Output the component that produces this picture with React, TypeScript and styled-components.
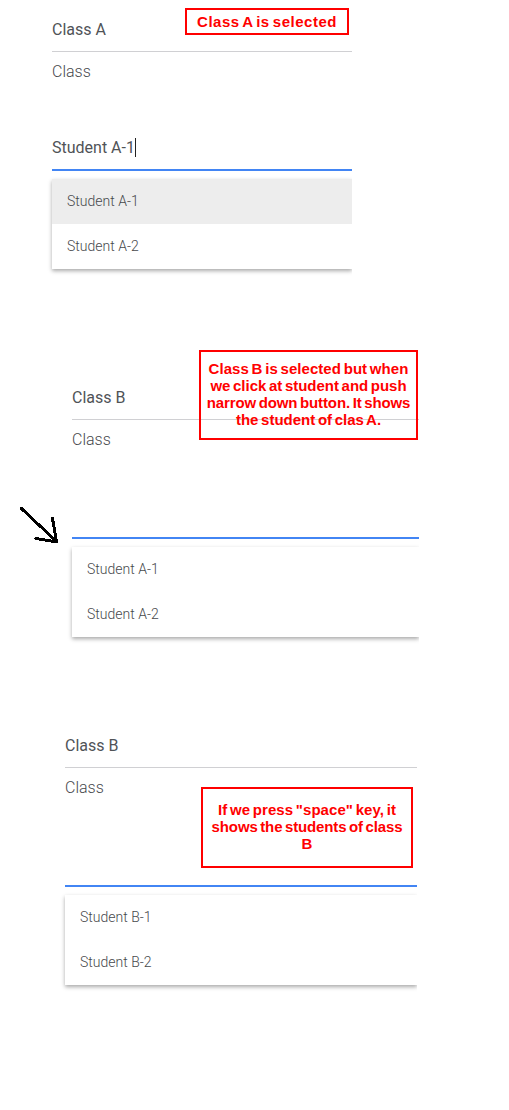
import React from "react";
import styled, { createGlobalStyle } from "styled-components";

const GlobalStyle = createGlobalStyle`
  * { box-sizing: border-box; }
  body { margin: 0; background: #fff; }
`;

const Page = styled.main`
  position: relative;
  display: flex;
  flex-direction: column;
  height: 1110px;
  overflow: hidden;
  font-family: Roboto, "Liberation Sans", sans-serif;
`;

const Step = styled.section<{ $left: number; $width: number }>`
  flex: none;
  display: flex;
  flex-direction: column;
  width: ${(p) => p.$width}px;
  height: 348px;
  margin-left: ${(p) => p.$left}px;

  &:first-child { height: 368px; }
`;

const ClassField = styled.div`
  height: 52px;
  padding-top: 20px;
  border-bottom: 1px solid #d0d0d3;
  color: #505357;
  font-size: 16px;
  line-height: 20px;
`;

const Label = styled.div`
  padding-top: 10px;
  color: #47494c;
  font-size: 16px;
  font-weight: 300;
  line-height: 20px;
`;

const StudentField = styled.div`
  display: flex;
  align-items: flex-start;
  height: 34px;
  margin-top: 55px;
  padding-top: 1px;
  border-bottom: 2px solid #4285f4;
  color: #505357;
  font-size: 16px;
  line-height: 20px;
`;

const Caret = styled.span`
  width: 1px;
  height: 19px;
  background: #222;
`;

const Menu = styled.ul`
  margin: 8px 0 0;
  padding: 0;
  list-style: none;
  background: #fff;
  box-shadow: 0 2px 4px rgba(0, 0, 0, 0.34);
  clip-path: inset(-8px 0 -10px -8px);
`;

const Option = styled.li<{ $active?: boolean }>`
  height: 45px;
  padding-left: 15px;
  background: ${(p) => (p.$active ? "#ededed" : "transparent")};
  color: #47494c;
  font-size: 14px;
  font-weight: 300;
  line-height: 45px;
`;

const Note = styled.aside<{ $x: number; $y: number; $w: number; $h: number; $lift?: number }>`
  position: absolute;
  left: ${(p) => p.$x}px;
  top: ${(p) => p.$y}px;
  width: ${(p) => p.$w}px;
  height: ${(p) => p.$h}px;
  display: flex;
  flex-direction: column;
  align-items: center;
  justify-content: center;
  padding-bottom: ${(p) => p.$lift ?? 0}px;
  border: 2px solid #f00;
  color: #f00;
  font: bold 15px/17px "Liberation Sans", Arial, sans-serif;
  word-spacing: -1.5px;
  white-space: nowrap;
`;

const NoteLine = styled.span<{ $spacing?: number }>`
  letter-spacing: ${(p) => p.$spacing ?? 0}px;
`;

const Arrow = styled.svg`
  position: absolute;
  left: 18px;
  top: 504px;
`;

type StepProps = {
  left: number;
  width: number;
  className: string;
  student?: string;
  options: string[];
  active?: number;
};

function FormStep({ left, width, className, student, options, active }: StepProps) {
  return (
    <Step $left={left} $width={width}>
      <ClassField>{className}</ClassField>
      <Label>Class</Label>
      <StudentField>
        {student}
        {student && <Caret />}
      </StudentField>
      <Menu>
        {options.map((o, i) => (
          <Option key={o} $active={i === active}>{o}</Option>
        ))}
      </Menu>
    </Step>
  );
}

export default function App() {
  return (
    <>
      <GlobalStyle />
      <Page>
        <FormStep left={52} width={300} className="Class A" student="Student A-1" options={["Student A-1", "Student A-2"]} active={0} />
        <FormStep left={72} width={347} className="Class B" options={["Student A-1", "Student A-2"]} />
        <FormStep left={65} width={352} className="Class B" options={["Student B-1", "Student B-2"]} />
        <Note $x={185} $y={8} $w={164} $h={27}>
          <NoteLine $spacing={0.5}>Class A is selected</NoteLine>
        </Note>
        <Note $x={199} $y={350} $w={219} $h={90} $lift={2}>
          <NoteLine $spacing={0.05}>Class B is selected but when</NoteLine>
          <NoteLine $spacing={-0.02}>we click at student and push</NoteLine>
          <NoteLine $spacing={-0.1}>narrow down button. It shows</NoteLine>
          <NoteLine>the student of clas A.</NoteLine>
        </Note>
        <Note $x={201} $y={787} $w={212} $h={81} $lift={2}>
          <NoteLine $spacing={0.05}>If we press "space" key, it</NoteLine>
          <NoteLine $spacing={-0.12}>shows the students of class</NoteLine>
          <NoteLine>B</NoteLine>
        </Note>
        <Arrow width="44" height="44" viewBox="0 0 44 44" fill="none" stroke="#000" strokeWidth="3" strokeLinecap="round" strokeLinejoin="round" shapeRendering="crispEdges">
          <path d="M3.5 4.5 39 38M34.5 14.5l4 23.5M18 34.5 39 38" />
        </Arrow>
      </Page>
    </>
  );
}
